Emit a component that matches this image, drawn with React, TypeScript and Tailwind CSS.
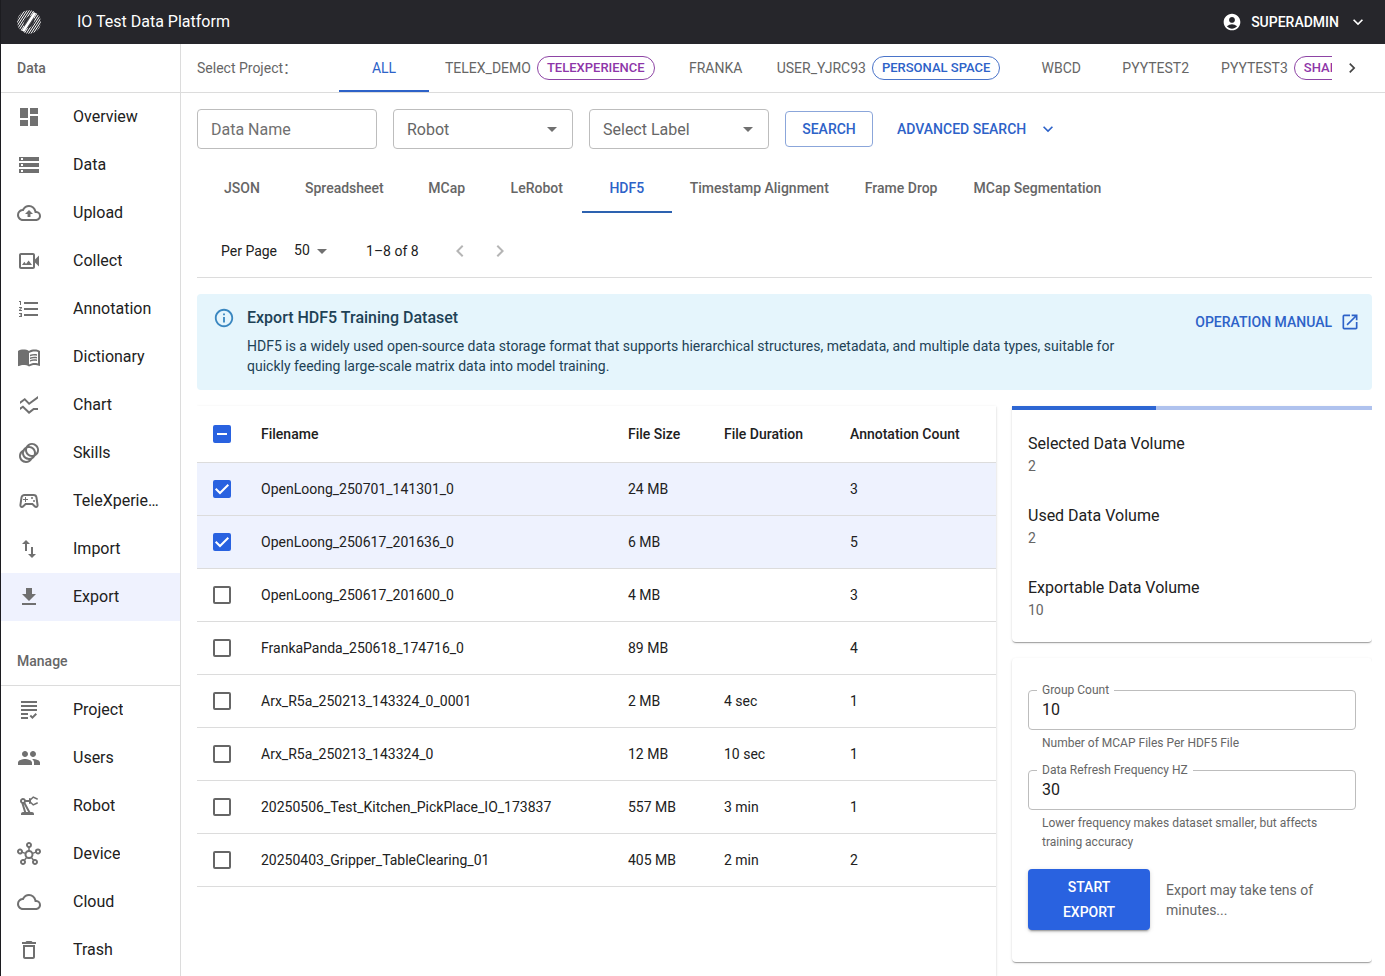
import React, { useState } from "react";
import {
  MdAccountCircle,
  MdArrowDropDown,
  MdChevronLeft,
  MdChevronRight,
  MdDashboard,
  MdDeleteOutline,
  MdDownload,
  MdExpandMore,
  MdFormatListNumbered,
  MdGrading,
  MdImportExport,
  MdMenuBook,
  MdOpenInNew,
  MdOutlineAnimation,
  MdOutlineBackup,
  MdOutlineCloud,
  MdOutlineHub,
  MdOutlineInfo,
  MdOutlinePrecisionManufacturing,
  MdOutlineSportsEsports,
  MdOutlineVideoCameraBack,
  MdPeople,
  MdSsidChart,
  MdStorage,
} from "react-icons/md";

type IconType = React.ComponentType<{ className?: string }>;
type NavEntry = { label: string; icon: IconType; active?: boolean };

const dataNav: NavEntry[] = [
  { label: "Overview", icon: MdDashboard },
  { label: "Data", icon: MdStorage },
  { label: "Upload", icon: MdOutlineBackup },
  { label: "Collect", icon: MdOutlineVideoCameraBack },
  { label: "Annotation", icon: MdFormatListNumbered },
  { label: "Dictionary", icon: MdMenuBook },
  { label: "Chart", icon: MdSsidChart },
  { label: "Skills", icon: MdOutlineAnimation },
  { label: "TeleXperience", icon: MdOutlineSportsEsports },
  { label: "Import", icon: MdImportExport },
  { label: "Export", icon: MdDownload, active: true },
];

const manageNav: NavEntry[] = [
  { label: "Project", icon: MdGrading },
  { label: "Users", icon: MdPeople },
  { label: "Robot", icon: MdOutlinePrecisionManufacturing },
  { label: "Device", icon: MdOutlineHub },
  { label: "Cloud", icon: MdOutlineCloud },
  { label: "Trash", icon: MdDeleteOutline },
];

const projects: { name: string; badge?: string; tone?: "purple" | "blue" }[] = [
  { name: "ALL" },
  { name: "TELEX_DEMO", badge: "TELEXPERIENCE", tone: "purple" },
  { name: "FRANKA" },
  { name: "USER_YJRC93", badge: "PERSONAL SPACE", tone: "blue" },
  { name: "WBCD" },
  { name: "PYYTEST2" },
  { name: "PYYTEST3", badge: "SHARED", tone: "purple" },
];

const formats = [
  "JSON",
  "Spreadsheet",
  "MCap",
  "LeRobot",
  "HDF5",
  "Timestamp Alignment",
  "Frame Drop",
  "MCap Segmentation",
];

const files = [
  { name: "OpenLoong_250701_141301_0", size: "24 MB", duration: "", count: 3 },
  { name: "OpenLoong_250617_201636_0", size: "6 MB", duration: "", count: 5 },
  { name: "OpenLoong_250617_201600_0", size: "4 MB", duration: "", count: 3 },
  { name: "FrankaPanda_250618_174716_0", size: "89 MB", duration: "", count: 4 },
  { name: "Arx_R5a_250213_143324_0_0001", size: "2 MB", duration: "4 sec", count: 1 },
  { name: "Arx_R5a_250213_143324_0", size: "12 MB", duration: "10 sec", count: 1 },
  { name: "20250506_Test_Kitchen_PickPlace_IO_173837", size: "557 MB", duration: "3 min", count: 1 },
  { name: "20250403_Gripper_TableClearing_01", size: "405 MB", duration: "2 min", count: 2 },
];

const paper =
  "bg-white shadow-[0_2px_1px_-1px_rgba(0,0,0,0.2),0_1px_1px_0_rgba(0,0,0,0.14),0_1px_3px_0_rgba(0,0,0,0.12)]";

function Logo() {
  return (
    <svg viewBox="0 0 24 24" className="size-6" aria-hidden="true">
      <defs>
        <clipPath id="logo-disc">
          <circle cx="12" cy="12" r="11.8" />
        </clipPath>
      </defs>
      <g clipPath="url(#logo-disc)" stroke="#fff" strokeWidth="1">
        <path d="M-11 26 7 -2M-8.7 26 9.3 -2M-6.4 26 11.6 -2M-4.1 26 13.9 -2M-1.8 26 16.2 -2M.5 26 18.5 -2M5.5 26 23.5 -2M7.8 26 25.8 -2M10.1 26 28.1 -2M12.4 26 30.4 -2M14.7 26 32.7 -2M17 26 35 -2" />
      </g>
      <ellipse cx="12" cy="12" rx="4.8" ry="6.6" transform="rotate(32 12 12)" fill="#26262b" fillOpacity="0.8" />
      <path d="M6 21.3 18 2.7" stroke="#fff" strokeWidth="2.8" />
    </svg>
  );
}

function NavList({ title, items }: { title: string; items: NavEntry[] }) {
  return (
    <section>
      <h2 className="flex h-[49px] items-center border-b border-[#dcdcdc] px-4 text-sm font-medium text-[#666]">
        {title}
      </h2>
      <ul>
        {items.map(({ label, icon: Icon, active }) => (
          <li key={label}>
            <a
              href="#"
              aria-current={active ? "page" : undefined}
              className={`flex h-12 items-center px-4 ${active ? "bg-[#eff2fe]" : ""}`}
            >
              <span className="w-14 shrink-0">
                <Icon className="size-6 text-[#707070]" />
              </span>
              <span className="truncate text-base text-[#212121]">{label}</span>
            </a>
          </li>
        ))}
      </ul>
    </section>
  );
}

function FilterSelect({ label }: { label: string }) {
  return (
    <div className="relative w-[180px]">
      <select
        aria-label={label}
        className="h-10 w-full appearance-none rounded border border-[#bdbdbd] bg-white px-[13px] pt-0.5 text-base text-[#666]"
      >
        <option>{label}</option>
      </select>
      <MdArrowDropDown className="pointer-events-none absolute top-2 right-[9px] size-6 text-[#707070]" />
    </div>
  );
}

function Checkbox({
  label,
  checked,
  mixed,
  onChange,
}: {
  label: string;
  checked: boolean;
  mixed?: boolean;
  onChange: () => void;
}) {
  return (
    <span className="relative block size-[18px]">
      <input
        type="checkbox"
        aria-label={label}
        checked={checked}
        onChange={onChange}
        className="block size-[18px] appearance-none rounded-[2px] border-2 border-[#666] checked:border-[#2962e0] checked:bg-[#2962e0]"
      />
      {checked && (
        <svg
          viewBox="0 0 18 18"
          className="pointer-events-none absolute inset-0 size-[18px]"
          fill="none"
          stroke="#fff"
          strokeWidth="2"
          aria-hidden="true"
        >
          <path d={mixed ? "M4 9h10" : "M2.7 8.7 7 13l8.3-8.3"} />
        </svg>
      )}
    </span>
  );
}

function NumberField({ id, label, value, hint }: { id: string; label: string; value: string; hint: string }) {
  return (
    <div>
      <div className="relative">
        <label htmlFor={id} className="absolute -top-2 left-[9px] bg-white px-[5px] text-xs text-[#666]">
          {label}
        </label>
        <input
          id={id}
          defaultValue={value}
          aria-describedby={`${id}-hint`}
          className="h-10 w-full rounded border border-[#bdbdbd] px-[13px] pb-0.5 text-base text-[#212121]"
        />
      </div>
      <p id={`${id}-hint`} className="mx-3.5 mt-1 text-xs leading-[19px] text-[#666]">
        {hint}
      </p>
    </div>
  );
}

function Stat({ label, value }: { label: string; value: number }) {
  return (
    <div className="px-4 py-3.5">
      <dt className="text-base leading-6 text-[#212121]">{label}</dt>
      <dd className="text-sm leading-5 text-[#666]">{value}</dd>
    </div>
  );
}

export default function App() {
  const [selected, setSelected] = useState<number[]>([0, 1]);
  const toggle = (i: number) =>
    setSelected((s) => (s.includes(i) ? s.filter((n) => n !== i) : [...s, i]));
  const toggleAll = () =>
    setSelected((s) => (s.length === files.length ? [] : files.map((_, i) => i)));

  return (
    <div className="flex h-screen flex-col overflow-hidden border-l border-[#1c1c20] bg-white font-[Roboto,'Noto_Sans_CJK_SC',sans-serif] text-[#212121]">
      <header className="flex h-11 shrink-0 items-center bg-[#26262b] pr-[17px] pl-4 text-white">
        <Logo />
        <h1 className="ml-9 text-base">IO Test Data Platform</h1>
        <button className="ml-auto flex items-center gap-[9px] text-sm font-medium">
          <MdAccountCircle className="size-5" />
          SUPERADMIN
          <MdExpandMore className="size-5" />
        </button>
      </header>

      <div className="flex min-h-0 grow">
        <nav className="w-[180px] shrink-0 space-y-4 overflow-hidden border-r border-[#dcdcdc]">
          <NavList title="Data" items={dataNav} />
          <NavList title="Manage" items={manageNav} />
        </nav>

        <main className="flex min-w-0 grow flex-col">
          <div className="flex h-[49px] shrink-0 items-center border-b border-[#dcdcdc] pr-[13px] pl-4">
            <span className="w-[142px] shrink-0 text-sm text-[#666]" lang="zh-CN">
              Select Project：
            </span>
            <div role="tablist" className="flex h-12 min-w-0 grow overflow-hidden">
              {projects.map((p, i) => (
                <button
                  key={p.name}
                  role="tab"
                  aria-selected={i === 0}
                  className={`flex h-12 min-w-[90px] shrink-0 items-center justify-center gap-1.5 border-b-2 px-4 pt-0.5 text-sm ${
                    i === 0 ? "border-[#2d62c8] text-[#2d62c8]" : "border-transparent text-[#666]"
                  }`}
                >
                  {p.name}
                  {p.badge && (
                    <span
                      className={`flex h-6 items-center rounded-full border px-[9px] text-[13px] font-medium ${
                        p.tone === "purple"
                          ? "border-[#8e44a5] text-[#8e35a8]"
                          : "border-[#4a74c9] text-[#2d62c8]"
                      }`}
                    >
                      {p.badge}
                    </span>
                  )}
                </button>
              ))}
            </div>
            <button aria-label="Scroll projects" className="flex w-10 shrink-0 justify-center">
              <MdChevronRight className="size-5 text-[#444]" />
            </button>
          </div>

          <div className="flex min-h-0 grow flex-col pt-4 pr-[13px] pl-4">
            <form className="flex shrink-0 items-center gap-4" onSubmit={(e) => e.preventDefault()}>
              <input
                aria-label="Data Name"
                placeholder="Data Name"
                className="h-10 w-[180px] rounded border border-[#bdbdbd] px-[13px] text-base placeholder:text-[#707070]"
              />
              <FilterSelect label="Robot" />
              <FilterSelect label="Select Label" />
              <button className="h-9 w-[88px] rounded border border-[#8ba6da] text-sm font-medium text-[#2d62c8]">
                SEARCH
              </button>
              <button type="button" className="flex items-center gap-3 px-2 text-sm font-medium text-[#2d62c8]">
                ADVANCED SEARCH
                <MdExpandMore className="size-5" />
              </button>
            </form>

            <div role="tablist" className="mt-4 flex shrink-0">
              {formats.map((f) => (
                <button
                  key={f}
                  role="tab"
                  aria-selected={f === "HDF5"}
                  className={`h-12 min-w-[90px] border-b-2 px-[18px] text-sm font-medium ${
                    f === "HDF5" ? "border-[#2d62b0] text-[#2d62c8]" : "border-transparent text-[#666]"
                  }`}
                >
                  {f}
                </button>
              ))}
            </div>

            <div className="mt-3 flex h-[53px] shrink-0 items-center border-b border-[#dcdcdc] pl-6 text-sm">
              <label htmlFor="per-page">Per Page</label>
              <div className="relative ml-[17px] flex w-10 items-center">
                <select id="per-page" className="w-full appearance-none bg-transparent pb-0.5">
                  <option>50</option>
                </select>
                <MdArrowDropDown className="pointer-events-none absolute right-0 size-6 text-[#707070]" />
              </div>
              <span className="ml-8">1–8 of 8</span>
              <button aria-label="Previous page" disabled className="ml-[21px] flex w-10 justify-center text-[#b5b5b5]">
                <MdChevronLeft className="size-6" />
              </button>
              <button aria-label="Next page" disabled className="flex w-10 justify-center text-[#b5b5b5]">
                <MdChevronRight className="size-6" />
              </button>
            </div>

            <div
              role="note"
              className="mt-4 flex shrink-0 items-start rounded bg-[#e5f5fc] px-4 pt-3 pb-3.5 text-[#1e4256]"
            >
              <MdOutlineInfo className="mt-px mr-3 size-[22px] shrink-0 text-[#3a87c0]" />
              <div className="min-w-0 grow pr-12">
                <h2 className="text-base leading-6 font-medium">Export HDF5 Training Dataset</h2>
                <p className="mt-1.5 max-w-[900px] text-sm leading-5">
                  HDF5 is a widely used open-source data storage format that supports hierarchical structures,
                  metadata, and multiple data types, suitable for quickly feeding large-scale matrix data into model
                  training.
                </p>
              </div>
              <a
                href="#"
                className="mt-1 -mr-1 flex shrink-0 items-center gap-2 text-sm leading-6 font-medium text-[#2d62c8]"
              >
                OPERATION MANUAL
                <MdOpenInNew className="size-5" />
              </a>
            </div>

            <div className="mt-4 flex min-h-0 grow gap-4 overflow-x-clip">
              <div className={`min-w-0 grow ${paper}`}>
                <table className="w-full table-fixed text-left text-sm">
                  <colgroup>
                    <col className="w-12" />
                    <col />
                    <col className="w-24" />
                    <col className="w-[126px]" />
                    <col className="w-[162px]" />
                  </colgroup>
                  <thead>
                    <tr className="h-14 border-b border-[#dcdcdc]">
                      <th className="pl-4">
                        <Checkbox
                          label="Select all"
                          checked={selected.length > 0}
                          mixed={selected.length < files.length}
                          onChange={toggleAll}
                        />
                      </th>
                      <th className="px-4 font-medium">Filename</th>
                      <th className="px-4 font-medium">File Size</th>
                      <th className="px-4 font-medium">File Duration</th>
                      <th className="px-4 font-medium">Annotation Count</th>
                    </tr>
                  </thead>
                  <tbody>
                    {files.map((f, i) => (
                      <tr
                        key={f.name}
                        className={`h-[53px] border-b border-[#dcdcdc] ${selected.includes(i) ? "bg-[#eef2fe]" : ""}`}
                      >
                        <td className="pl-4">
                          <Checkbox label={f.name} checked={selected.includes(i)} onChange={() => toggle(i)} />
                        </td>
                        <td className="px-4">{f.name}</td>
                        <td className="px-4">{f.size}</td>
                        <td className="px-4">{f.duration}</td>
                        <td className="px-4">{f.count}</td>
                      </tr>
                    ))}
                  </tbody>
                </table>
              </div>

              <aside className="flex w-[360px] shrink-0 flex-col gap-4">
                <section className={`shrink-0 rounded-b ${paper}`}>
                  <div
                    role="progressbar"
                    aria-label="Export quota"
                    aria-valuenow={40}
                    aria-valuemin={0}
                    aria-valuemax={100}
                    className="h-1 bg-[#afc2ee]"
                  >
                    <div className="h-1 w-2/5 bg-[#2d66d3]" />
                  </div>
                  <dl className="py-2">
                    <Stat label="Selected Data Volume" value={2} />
                    <Stat label="Used Data Volume" value={2} />
                    <Stat label="Exportable Data Volume" value={10} />
                  </dl>
                </section>

                <form
                  className={`flex shrink-0 flex-col gap-[17px] rounded px-4 py-8 ${paper}`}
                  onSubmit={(e) => e.preventDefault()}
                >
                  <NumberField
                    id="group-count"
                    label="Group Count"
                    value="10"
                    hint="Number of MCAP Files Per HDF5 File"
                  />
                  <NumberField
                    id="frequency"
                    label="Data Refresh Frequency HZ"
                    value="30"
                    hint="Lower frequency makes dataset smaller, but affects training accuracy"
                  />
                  <div className="flex items-center gap-4">
                    <button className="w-[122px] shrink-0 rounded bg-[#2962e0] px-4 pt-1.5 pb-[5px] text-sm leading-[25px] font-medium text-white shadow-[0_3px_1px_-2px_rgba(0,0,0,0.2),0_2px_2px_0_rgba(0,0,0,0.14),0_1px_5px_0_rgba(0,0,0,0.12)]">
                      START
                      <br />
                      EXPORT
                    </button>
                    <p className="text-sm leading-5 text-[#666]">Export may take tens of minutes...</p>
                  </div>
                </form>
              </aside>
            </div>
          </div>
        </main>
      </div>
    </div>
  );
}
